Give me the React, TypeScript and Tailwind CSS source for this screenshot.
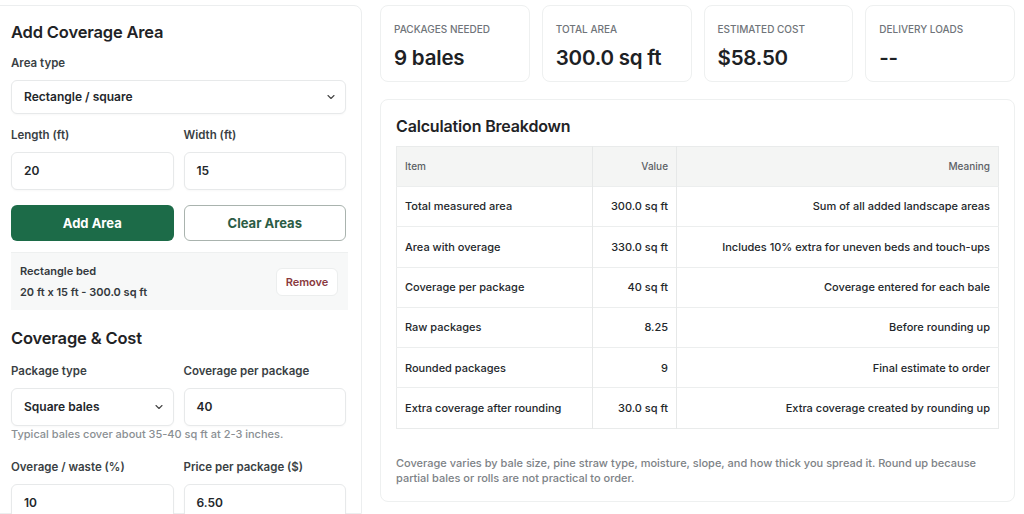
import { ChevronDown } from 'lucide-react';

const rows = [
  { item: 'Total measured area', value: '300.0 sq ft', meaning: 'Sum of all added landscape areas' },
  { item: 'Area with overage', value: '330.0 sq ft', meaning: 'Includes 10% extra for uneven beds and touch-ups' },
  { item: 'Coverage per package', value: '40 sq ft', meaning: 'Coverage entered for each bale' },
  { item: 'Raw packages', value: '8.25', meaning: 'Before rounding up' },
  { item: 'Rounded packages', value: '9', meaning: 'Final estimate to order' },
  { item: 'Extra coverage after rounding', value: '30.0 sq ft', meaning: 'Extra coverage created by rounding up' },
];

const stats = [
  { label: 'Packages needed', value: '9 bales' },
  { label: 'Total area', value: '300.0 sq ft' },
  { label: 'Estimated cost', value: '$58.50' },
  { label: 'Delivery loads', value: '--' },
];

function Label({ children }: { children: React.ReactNode }) {
  return <div className="mb-[8px] text-[11.5px] font-semibold text-[#3a3f44]">{children}</div>;
}

function Field({ value, select, h = 'h-[38px]' }: { value: string; select?: boolean; h?: string }) {
  return (
    <div
      className={`flex ${h} items-center justify-between rounded-md border border-[#e7e9ea] bg-white pl-3 pr-2 text-[12px] font-semibold text-[#23272b] shadow-[0_1px_2px_rgba(0,0,0,0.03)]`}
    >
      <span>{value}</span>
      {select && <ChevronDown size={12} strokeWidth={2.2} className="text-[#444]" />}
    </div>
  );
}

export default function App() {
  return (
    <div
      className="flex h-[514px] gap-[18px] overflow-hidden bg-white pt-[5px]"
      style={{ fontFamily: 'Inter, "Noto Sans", sans-serif' }}
    >
      <div className="-ml-px w-[363px] shrink-0 rounded-tr-lg border border-[#eceeef] bg-white pl-[11px] pr-[15px] pt-[14px]">
        <h2 className="text-[16.5px] font-semibold tracking-[-0.01em] text-[#1f2326]">Add Coverage Area</h2>
        <div className="mt-[10px]">
          <Label>Area type</Label>
          <Field value="Rectangle / square" select h="h-[34px]" />
        </div>
        <div className="mt-[13px] grid grid-cols-2 gap-[10px]">
          <div>
            <Label>Length (ft)</Label>
            <Field value="20" />
          </div>
          <div>
            <Label>Width (ft)</Label>
            <Field value="15" />
          </div>
        </div>
        <div className="mt-[15px] grid grid-cols-2 gap-[10px]">
          <button className="h-[36px] rounded-md bg-[#1c6b48] text-[13px] font-bold text-white">Add Area</button>
          <button className="h-[36px] rounded-md border border-[#a9b3ae] bg-white text-[13px] font-bold text-[#2b5c45]">
            Clear Areas
          </button>
        </div>
        <div className="-mr-[2px] mt-[11px] flex h-[58px] items-center justify-between border-t border-[#eef0f0] bg-[#f7f8f8] pl-[9px] pr-[10px]">
          <div className="text-[11px] font-semibold leading-[21px] text-[#34393d]">
            <div>Rectangle bed</div>
            <div>20 ft x 15 ft - 300.0 sq ft</div>
          </div>
          <button className="flex h-[28px] w-[62px] items-center justify-center rounded-md border border-[#eceeee] bg-white text-[11px] font-semibold text-[#8a3a40]">
            Remove
          </button>
        </div>
        <h2 className="mt-[16px] text-[16.5px] font-semibold tracking-[-0.01em] text-[#1f2326]">Coverage &amp; Cost</h2>
        <div className="mt-[12px] grid grid-cols-2 gap-[10px]">
          <div>
            <Label>Package type</Label>
            <Field value="Square bales" select />
          </div>
          <div>
            <Label>Coverage per package</Label>
            <Field value="40" />
          </div>
        </div>
        <p className="text-[11px] font-medium text-[#8a8f93]">Typical bales cover about 35-40 sq ft at 2-3 inches.</p>
        <div className="mt-[16px] grid grid-cols-2 gap-[10px]">
          <div>
            <Label>Overage / waste (%)</Label>
            <Field value="10" />
          </div>
          <div>
            <Label>Price per package ($)</Label>
            <Field value="6.50" />
          </div>
        </div>
      </div>

      <div className="w-[635px] shrink-0">
        <div className="grid grid-cols-4 gap-3">
          {stats.map((s) => (
            <div key={s.label} className="h-[77px] rounded-lg border border-[#eef0f0] bg-white px-[13px] pt-[16px]">
              <div className="text-[10px] font-medium uppercase text-[#6f7479]">{s.label}</div>
              <div className="mt-[6px] text-[20.5px] font-semibold tracking-[-0.01em] text-[#1d2124]">{s.value}</div>
            </div>
          ))}
        </div>
        <div className="mt-[17px] h-[403px] rounded-lg border border-[#eef0f0] bg-white px-[15px] pt-[14px]">
          <h3 className="text-[16px] font-semibold tracking-[-0.01em] text-[#1f2326]">Calculation Breakdown</h3>
          <table className="mt-[8px] w-[603px] border-collapse border border-[#e9ebeb] text-[11px]">
            <thead>
              <tr className="h-[40px] bg-[#f4f5f4] text-[10px] font-medium text-[#5b6065]">
                <th className="w-[196px] border-r border-[#e6e8e8] px-2 text-left font-medium">Item</th>
                <th className="w-[84px] border-r border-[#e6e8e8] px-2 text-right font-medium">Value</th>
                <th className="px-2 text-right font-medium">Meaning</th>
              </tr>
            </thead>
            <tbody>
              {rows.map((r) => (
                <tr key={r.item} className="h-[40.3px] border-t border-[#eceeee] font-medium text-[#23272b]">
                  <td className="border-r border-[#e6e8e8] px-2">{r.item}</td>
                  <td className="border-r border-[#e6e8e8] px-2 text-right">{r.value}</td>
                  <td className="px-2 text-right">{r.meaning}</td>
                </tr>
              ))}
            </tbody>
          </table>
          <p className="mt-[27px] text-[11px] font-medium leading-[15.5px] text-[#7d8286]">
            Coverage varies by bale size, pine straw type, moisture, slope, and how thick you spread it. Round up because
            partial bales or rolls are not practical to order.
          </p>
        </div>
      </div>
    </div>
  );
}
